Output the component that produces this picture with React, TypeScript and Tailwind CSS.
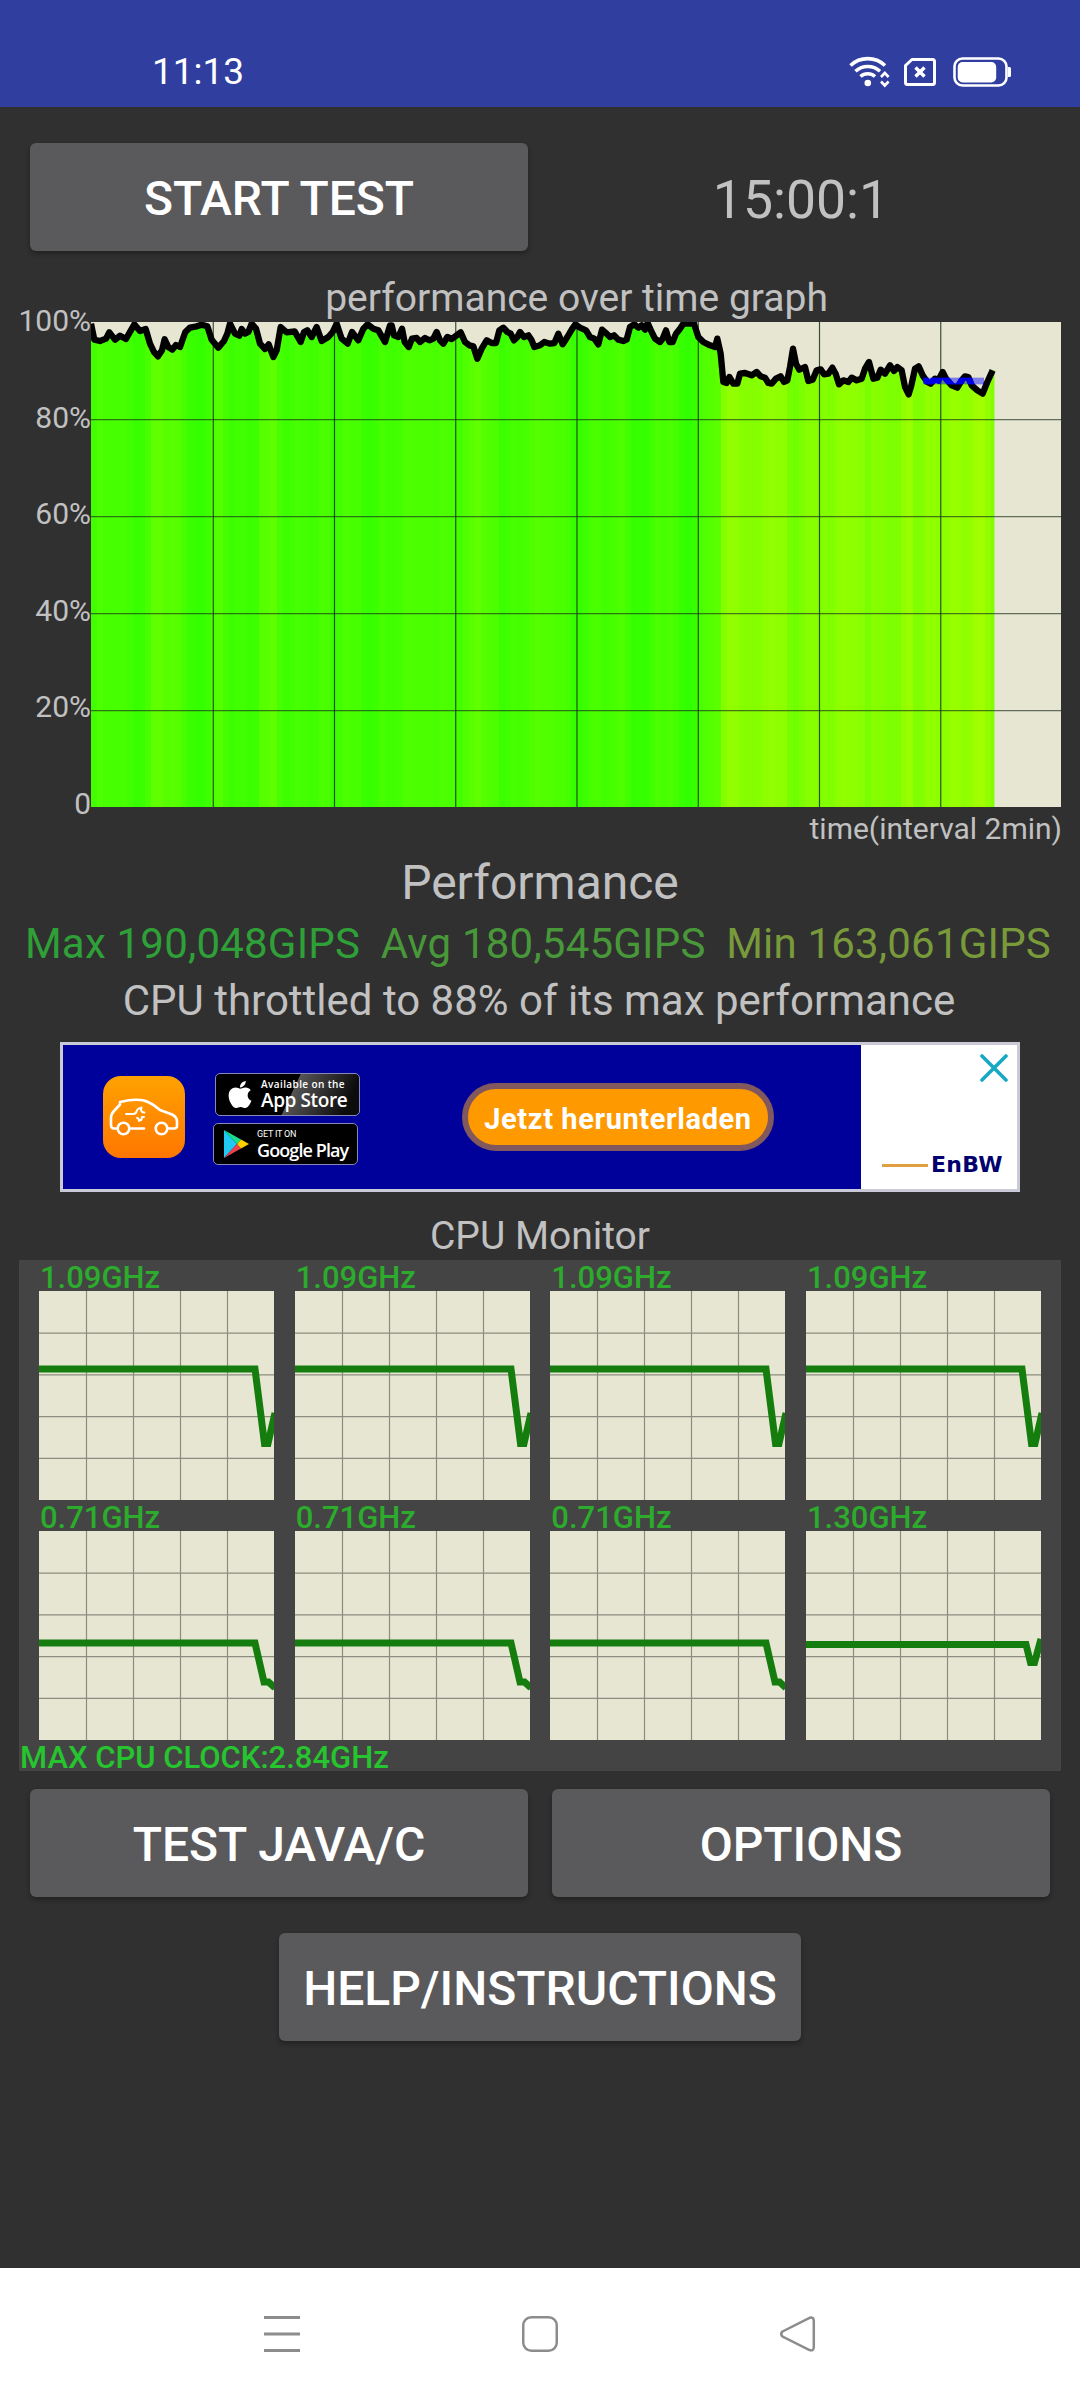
import { FaApple } from "react-icons/fa"

// x, y pairs, 3 units per pixel, origin in the top left corner of the graph
const samples: [number, number][] = [
  [0, 5], [10, 53], [27, 57], [45, 50], [55, 31], [72, 53], [87, 41], [105, 51], [115, 33], [130, 7], [147, 27], [164, 21],
  [177, 65], [189, 90], [201, 103], [213, 85], [221, 52], [232, 75], [244, 83], [255, 69], [267, 75], [283, 30], [297, 17],
  [317, 13], [332, 8], [349, 13], [362, 53], [382, 77], [399, 57], [409, 35], [417, 5], [432, 35], [445, 41], [452, 21],
  [462, 35], [472, 30], [482, 5], [495, 20], [507, 65], [522, 81], [533, 67], [547, 105], [557, 85], [569, 15], [587, 31],
  [611, 28], [629, 60], [639, 30], [649, 25], [662, 45], [677, 15], [692, 57], [712, 45], [725, 30], [737, 5], [752, 50],
  [770, 65], [783, 30], [802, 55], [817, 20], [830, 7], [847, 20], [862, 25], [882, 60], [897, 10], [902, 10], [909, 40],
  [922, 45], [933, 20], [941, 60], [953, 75], [963, 50], [977, 48], [987, 60], [1002, 48], [1015, 55], [1027, 50],
  [1037, 30], [1047, 55], [1057, 65], [1069, 45], [1082, 51], [1097, 40], [1109, 31], [1122, 60], [1135, 70], [1147, 73],
  [1159, 110], [1172, 80], [1187, 55], [1202, 63], [1215, 63], [1225, 25], [1237, 17], [1249, 30], [1259, 35], [1269, 55],
  [1279, 45], [1287, 30], [1299, 45], [1312, 40], [1322, 55], [1330, 75], [1347, 70], [1360, 60], [1377, 65], [1390, 63],
  [1402, 35], [1415, 67], [1429, 45], [1442, 23], [1453, 7], [1467, 17], [1485, 25], [1497, 45], [1510, 50], [1522, 67],
  [1533, 23], [1547, 35], [1557, 45], [1569, 40], [1582, 53], [1597, 57], [1607, 53], [1617, 15], [1630, 7], [1642, 17],
  [1652, 10], [1662, 23], [1670, 3], [1682, 30], [1692, 50], [1707, 60], [1715, 50], [1725, 25], [1735, 60], [1745, 60],
  [1755, 35], [1767, 20], [1777, 5], [1809, 5], [1822, 45], [1837, 60], [1857, 70], [1872, 75], [1879, 50], [1889, 95],
  [1897, 180], [1907, 183], [1915, 165], [1927, 185], [1939, 185], [1947, 155], [1962, 153], [1982, 160], [1997, 150],
  [2009, 163], [2022, 167], [2032, 183], [2042, 185], [2055, 170], [2069, 163], [2079, 180], [2089, 175], [2097, 135],
  [2106, 80], [2115, 125], [2125, 143], [2142, 135], [2152, 177], [2165, 173], [2177, 145], [2189, 142], [2199, 157],
  [2212, 155], [2224, 137], [2234, 155], [2244, 187], [2257, 175], [2272, 180], [2282, 167], [2297, 175], [2312, 170],
  [2322, 140], [2334, 120], [2347, 170], [2359, 167], [2369, 143], [2382, 155], [2397, 130], [2409, 147], [2419, 135],
  [2432, 145], [2442, 195], [2453, 217], [2461, 190], [2472, 140], [2483, 133], [2495, 160], [2509, 180], [2519, 185],
  [2532, 170], [2542, 175], [2555, 150], [2565, 170], [2582, 190], [2599, 197], [2612, 175], [2622, 163], [2632, 165],
  [2642, 190], [2659, 205], [2675, 215], [2689, 180], [2705, 145],
]

const linePoints = samples.map((s) => s.join(",")).join(" ")
const areaPoints = `0,1455 ${linePoints} 2711,145 2711,1455`

function valueAt(x: number) {
  const i = samples.findIndex((s) => s[0] >= x)
  if (i < 1) return samples[i === 0 ? 0 : samples.length - 1][1]
  const [x0, y0] = samples[i - 1]
  const [x1, y1] = samples[i]
  return y0 + ((y1 - y0) * (x - x0)) / (x1 - x0)
}

// the lower the score, the more yellow the bar
const bars = Array.from({ length: 151 }, (_, i) => {
  const x = i * 18
  const avg = (valueAt(x) + valueAt(x + 9) + valueAt(x + 18)) / 3
  return { x, fill: `rgb(${Math.round(46 + avg * 0.56)},255,0)` }
})

const percents = ["100%", "80%", "60%", "40%", "20%", "0"]

const fast = "0,78 216,78 225.5,152.5 229,152.5 236,122"
const slow = "0,112 216,112 225,151 229.5,151 236,157"
const prime = "0,113.4 220,113.4 224.5,131.5 228.5,131.5 235,108"

const cores = [
  { clock: "1.09GHz", points: fast },
  { clock: "1.09GHz", points: fast },
  { clock: "1.09GHz", points: fast },
  { clock: "1.09GHz", points: fast },
  { clock: "0.71GHz", points: slow },
  { clock: "0.71GHz", points: slow },
  { clock: "0.71GHz", points: slow },
  { clock: "1.30GHz", points: prime },
]

function StatusBar() {
  return (
    <header className="flex h-[107px] items-center justify-between bg-[#303f9f] pt-[37px] pr-[69px] pl-[152px]">
      <span className="text-[37px] leading-[40px] text-white">11:13</span>
      <div className="flex items-center text-white">
        <svg className="h-[32px] w-[42px]" viewBox="0 0 42 32" fill="none" stroke="currentColor" strokeWidth="3.6">
          <path d="M1.5 9.5a25 25 0 0 1 34.5 0" />
          <path d="M6.5 15.3a18 18 0 0 1 24.5 0" />
          <path d="M11.5 20.5a11 11 0 0 1 14.500 0" />
          <circle cx="18.8" cy="27" r="3.3" fill="currentColor" stroke="none" />
          <path d="M32 21l3.8-4 3.8 4M32 25.500l3.8 4 3.8-4" strokeWidth="2.6" />
        </svg>
        <svg className="ml-[13px] h-[30px] w-[32px]" viewBox="0 0 32 30" fill="none" stroke="currentColor">
          <path d="M8 2.5h20.5q2 0 2 2v21q0 2-2 2h-25q-2 0-2-2V8.500z" strokeWidth="3" strokeLinejoin="round" />
          <path d="M11.500 10.500l9 9M20.500 10.500l-9 9" strokeWidth="3.400" />
        </svg>
        <svg className="ml-[17px] h-[30px] w-[58px]" viewBox="0 0 58 30" fill="none">
          <rect x="1.5" y="1.5" width="52" height="27" rx="8" stroke="currentColor" strokeWidth="2.6" />
          <rect x="4.7" y="5" width="38.5" height="20.5" rx="5" fill="currentColor" />
          <path d="M55 10h1.5q1.5 0 1.5 1.5v7q0 1.5-1.500 1.500H55z" fill="currentColor" />
        </svg>
      </div>
    </header>
  )
}

function Button({ label, className }: { label: string; className: string }) {
  return (
    <button
      className={`flex h-[108px] items-center justify-center rounded-[6px] bg-[#5a595b] pt-[3px] text-[48px] leading-[56px] font-medium text-white shadow-[0_3px_5px_rgba(0,0,0,0.3)] ${className}`}
    >
      {label}
    </button>
  )
}

function PerformanceGraph() {
  return (
    <svg className="block h-[485px] w-[971px]" viewBox="0 0 2913 1455">
      <defs>
        <clipPath id="area">
          <polygon points={areaPoints} />
        </clipPath>
        <clipPath id="band">
          <rect x="2496" y="167" width="183" height="20" />
        </clipPath>
      </defs>
      <rect width="2910" height="1455" fill="#e6e6d2" />
      <g clipPath="url(#area)" shapeRendering="crispEdges">
        {bars.map((bar) => (
          <rect key={bar.x} x={bar.x} width="18" height="1455" fill={bar.fill} />
        ))}
      </g>
      <g stroke="#1c2e1c" strokeWidth="3.5" strokeOpacity="0.85">
        {[1, 2, 3, 4, 5, 6, 7].map((n) => (
          <line key={n} x1={3 + n * 363.75} x2={3 + n * 363.75} y1="0" y2="1455" />
        ))}
        {[1, 2, 3, 4].map((n) => (
          <line key={n} x1="0" x2="2910" y1={2 + n * 291} y2={2 + n * 291} strokeOpacity="0.65" />
        ))}
      </g>
      <polyline points={linePoints} fill="none" stroke="#000" strokeWidth="19" strokeLinejoin="round" />
      <rect x="2496" y="167" width="183" height="20" fill="#0000ff" fillOpacity="0.45" />
      <polyline points={linePoints} fill="none" stroke="#0000e6" strokeWidth="19" clipPath="url(#band)" />
    </svg>
  )
}

function CoreGraph({ clock, points }: { clock: string; points: string }) {
  return (
    <div className="w-[235px]">
      <div className="h-[31px] pl-[1px] text-[31px] leading-[35px] font-medium text-[#2cab2c]">{clock}</div>
      <svg className="block h-[209px] w-[235px]" viewBox="0 0 235 209">
        <rect width="235" height="209" fill="#e6e6d2" />
        <g stroke="#8c8c80" strokeWidth="1.2">
          {[1, 2, 3, 4].map((n) => (
            <line key={n} x1={0.5 + n * 47} x2={0.5 + n * 47} y1="0" y2="209" />
          ))}
          {[1, 2, 3, 4].map((n) => (
            <line key={n} x1="0" x2="235" y1={0.5 + n * 41.7} y2={0.5 + n * 41.7} />
          ))}
        </g>
        <polyline points={points} fill="none" stroke="#157d0d" strokeWidth="7" />
      </svg>
    </div>
  )
}

function AdBanner() {
  return (
    <div className="mx-auto mt-4 flex h-[150px] w-[960px] border-[3px] border-[#c9c9d8] bg-white">
      <div className="flex w-[798px] items-center bg-[#00009b] pl-[40px]">
        <svg className="h-[82px] w-[82px]" viewBox="0 0 82 82">
          <defs>
            <linearGradient id="orange" x1="0" y1="0" x2="0" y2="1">
              <stop offset="0" stopColor="#ffa200" />
              <stop offset="1" stopColor="#ff7600" />
            </linearGradient>
          </defs>
          <rect width="82" height="82" rx="18" fill="url(#orange)" />
          <g fill="none" stroke="#fff" strokeWidth="2.6" strokeLinecap="round" strokeLinejoin="round">
            <path d="M13.5 52.5H11q-3 0-3-3.5V42q0-4 3-7l6-6.500V26q19-4.500 28 0 6 2.500 12 8l12 4.500q5 2.500 5 7V50q0 2.500-3 2.500h-5.500" />
            <path d="M28 52.5h13" />
            <circle cx="20.5" cy="52.5" r="5.8" />
            <circle cx="58.5" cy="52.5" r="5.8" />
            <path d="M23 38h7q3 0 3.500-2.500 1-3.500 5-3.500v-.5M38 33q0 3.500 3.500 3.500M34 42q2 0 2 3M36 44.500q3 0 3-3.500h2" strokeWidth="2" />
          </g>
        </svg>
        <div className="ml-[28px] flex w-[148px] flex-col gap-[7px] pt-[4px]">
          <div className="ml-[2px] flex h-[43px] w-[145px] items-center rounded-[5px] border border-[#8888b8] bg-[linear-gradient(115deg,#000_52%,#555_52.5%,#0c0c0c_90%)] pl-[12px] text-white">
            <FaApple className="h-[31px] w-[24px]" />
            <div className="ml-[9px] flex flex-col font-['Open_Sans']">
              <span className="text-[10px] leading-[12px] font-semibold tracking-[0.4px] whitespace-nowrap">Available on the</span>
              <span className="text-[19px] leading-[21px] font-semibold tracking-[-0.4px] whitespace-nowrap">App Store</span>
            </div>
          </div>
          <div className="flex h-[42px] w-[145px] items-center rounded-[5px] border border-[#8888b8] bg-black pl-[9px] text-white">
            <svg className="h-[28px] w-[26px]" viewBox="0 0 26 28">
              <path d="M1 0v28L14 14z" fill="#20c8f4" />
              <path d="M1 0l17 9.5-4 4.5z" fill="#18e08a" />
              <path d="M1 28l17-9.5-4-4.5z" fill="#f0404c" />
              <path d="M18 9.5l8 4.5-8 4.5-4-4.500z" fill="#ffd000" />
            </svg>
            <div className="ml-[8px] flex flex-col">
              <span className="text-[9px] leading-[11px] tracking-[-0.2px] whitespace-nowrap">GET IT ON</span>
              <span className="font-['Open_Sans'] text-[18px] leading-[20px] font-semibold tracking-[-0.9px] whitespace-nowrap">
                Google Play
              </span>
            </div>
          </div>
        </div>
        <div className="ml-[101px] flex h-[68px] w-[312px] items-center justify-center rounded-full border-[6px] border-[#80585e] bg-[#ff9900] pt-[3px]">
          <span className="text-[29px] leading-[34px] font-bold tracking-[0.6px] whitespace-nowrap text-white">Jetzt herunterladen</span>
        </div>
      </div>
      <div className="flex flex-1 flex-col items-end justify-between pt-[9px] pr-[9px] pb-[12px]">
        <svg className="h-[28px] w-[28px]" viewBox="0 0 28 28" stroke="#18a8c4" strokeWidth="3.6" strokeLinecap="round">
          <path d="M2 2l24 24M26 2L2 26" />
        </svg>
        <div className="flex items-center pr-[5px]">
          <div className="h-[3px] w-[46px] bg-[#e0a040]" />
          <span className="ml-[3px] font-['DejaVu_Sans',sans-serif] text-[22px] leading-[24px] font-bold tracking-[0.4px] text-[#00006e]">EnBW</span>
        </div>
      </div>
    </div>
  )
}

function CpuMonitor() {
  return (
    <section>
      <h2 className="mt-[22px] h-[44px] text-center text-[39px] leading-[45px]">CPU Monitor</h2>
      <div className="mt-[2px] ml-[19px] h-[511px] w-[1042px] bg-[#444444]">
        <div className="ml-[20px] grid w-[1002px] grid-cols-[235px_235px_235px_235px] justify-between">
          {cores.map((core, i) => (
            <CoreGraph key={i} {...core} />
          ))}
        </div>
        <div className="h-[31px] pl-[1px] text-[31px] leading-[35px] font-medium text-[#26c42e]">MAX CPU CLOCK:2.84GHz</div>
      </div>
    </section>
  )
}

function NavBar() {
  return (
    <nav className="mt-auto flex h-[132px] items-center justify-center gap-[222px] bg-white text-[#8c8c8c]">
      <svg className="h-[36px] w-[36px]" viewBox="0 0 36 36" stroke="currentColor" strokeWidth="3">
        <path d="M0 1.5h36M0 18h36M0 34.5h36" />
      </svg>
      <svg className="h-[36px] w-[36px]" viewBox="0 0 36 36" fill="none" stroke="currentColor" strokeWidth="2.5">
        <rect x="1.25" y="1.25" width="33.5" height="33.5" rx="8" />
      </svg>
      <svg className="h-[36px] w-[36px]" viewBox="0 0 36 36" fill="none" stroke="currentColor" strokeWidth="2.5">
        <path d="M2.5 15.5L29.5 1.8Q33.8 .5 33.8 5v26q0 4.500-4.300 3L2.500 20.500q-2.500-2.500 0-5z" />
      </svg>
    </nav>
  )
}

export default function App() {
  return (
    <div className="flex h-[2400px] w-[1080px] flex-col overflow-hidden bg-[#303030] font-[Roboto,sans-serif] text-[#c1c1c1]">
      <StatusBar />

      <div className="mt-9 flex gap-6 px-[30px]">
        <Button label="START TEST" className="w-[498px]" />
        <div className="flex w-[494px] items-center justify-center pt-[5px] pl-[4px] text-[53.5px] leading-[64px]">15:00:1</div>
      </div>

      <section className="mt-6 flex">
        <div className="flex h-[544px] w-[91px] flex-col justify-between pt-[31px] text-right text-[30px] leading-[30px]">
          {percents.map((p) => (
            <span key={p}>{p}</span>
          ))}
        </div>
        <div className="w-[971px]">
          <h2 className="mb-[2px] h-[45px] text-center text-[39px] leading-[47px]">performance over time graph</h2>
          <PerformanceGraph />
          <p className="mt-1 h-[36px] text-right text-[30px] leading-[36px]">time(interval 2min)</p>
        </div>
      </section>

      <h1 className="mt-[8px] h-[56px] text-center text-[48px] leading-[56px]">Performance</h1>
      <div className="mt-[8px] flex h-[50px] justify-between pr-[29px] pl-[25px] text-[42px] leading-[50px] tracking-[0.2px] whitespace-nowrap">
        <span className="text-[#2fa038]">Max 190,048GIPS</span>
        <span className="text-[#48983a]">Avg 180,545GIPS</span>
        <span className="text-[#789a3a]">Min 163,061GIPS</span>
      </div>
      <p className="mt-[7px] h-[50px] pr-[2px] text-center text-[42px] leading-[50px] whitespace-nowrap">
        CPU throttled to 88% of its max performance
      </p>

      <AdBanner />
      <CpuMonitor />

      <div className="mt-[18px] flex gap-6 px-[30px]">
        <Button label="TEST JAVA/C" className="w-[498px]" />
        <Button label="OPTIONS" className="w-[498px]" />
      </div>
      <Button label="HELP/INSTRUCTIONS" className="mt-9 w-[522px] self-center" />

      <NavBar />
    </div>
  )
}
